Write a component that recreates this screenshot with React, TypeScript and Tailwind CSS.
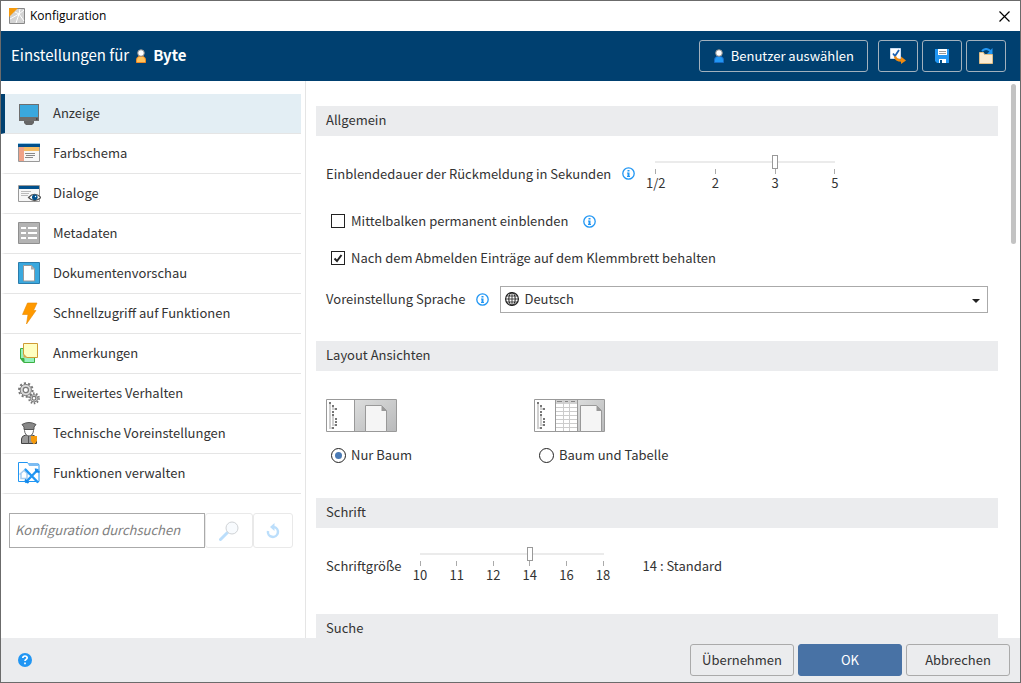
import { useState, type ReactNode } from "react"

function UserIcon({ color, outline }: { color: string; outline: string }) {
  return (
    <svg width="12" height="14" viewBox="0 0 12 14" className="shrink-0">
      <path d="M1.500 13.500V11q0-3 2.500-3.500h4q2.500.5 2.500 3.500v2.500z" fill={color} stroke={outline} />
      <circle cx="6" cy="4" r="3.300" fill="#fff" stroke="#8c8c8c" />
    </svg>
  )
}

function InfoIcon() {
  return (
    <svg width="13" height="13" viewBox="0 0 13 13" className="shrink-0">
      <circle cx="6.500" cy="6.500" r="5.700" fill="#fff" stroke="#2196f3" strokeWidth="1.300" />
      <path d="M5.500 3h2v1.500h-2zM5 5.500h2.500V9H8v1H5V9h.5V6.500H5z" fill="#2196f3" />
    </svg>
  )
}

function Gear({ x, y, r }: { x: number; y: number; r: number }) {
  const tooth = (2 * Math.PI * r) / 20
  return (
    <g fill="none">
      <circle cx={x} cy={y} r={r} stroke="#777" strokeWidth="2" strokeDasharray={`${tooth} ${tooth}`} />
      <circle cx={x} cy={y} r={r - 1.2} fill="#d9d9d9" stroke="#808080" strokeWidth="1" />
      <circle cx={x} cy={y} r={r / 2.6} fill="#fff" stroke="#777" strokeWidth="1.200" />
    </g>
  )
}

const navItems: { label: string; icon: ReactNode }[] = [
  {
    label: "Anzeige",
    icon: (
      <>
        <path d="M1 2h20v17H1z" fill="#6e6e6e" />
        <path d="M2 3h18v12H2z" fill="#3aa8de" />
        <path d="M18 16.500h1.500v1H18z" fill="#222" />
        <path d="M6 19h10v2l-2 2H8l-2-2z" fill="#666" />
      </>
    ),
  },
  {
    label: "Farbschema",
    icon: (
      <>
        <path d="M.5 1.500h21v18H.5z" fill="#f7f7f7" stroke="#999" />
        <path d="M0 1h22v1H0z" fill="#9ccbe8" />
        <path d="M0 2h22v3H0z" fill="#00508c" />
        <path d="M1 5h5v14H1z" fill="#f0a288" />
        <path d="M6 5h15v4H6z" fill="#f5bd66" />
        <path d="M7 11.500h10M8 13.500h9M7 15.500h8" stroke="#888" />
      </>
    ),
  },
  {
    label: "Dialoge",
    icon: (
      <>
        <path d="M.5 3.500h21v16H.5z" fill="#f7f7f7" stroke="#999" />
        <path d="M1 4h20v3H1z" fill="#00508c" />
        <path d="M3 9.500h10M3 11.500h8M3 13.500h7" stroke="#bbb" />
        <path d="M10.500 15.500q6-6.500 12.500 0q-6.500 6-12.500 0z" fill="#fff" stroke="#555" strokeWidth="1.200" />
        <circle cx="16.800" cy="15.300" r="2.800" fill="#00508c" />
        <circle cx="17.500" cy="14.500" r=".7" fill="#fff" />
      </>
    ),
  },
  {
    label: "Metadaten",
    icon: (
      <>
        <path d="M.5.5h21v21H.5z" fill="#b3b3b3" stroke="#8f8f8f" />
        <path d="M3 6h5M10 6h9M3 11h5M10 11h9M3 16h5M10 16h9" stroke="#fff" strokeWidth="2" />
      </>
    ),
  },
  {
    label: "Dokumentenvorschau",
    icon: (
      <>
        <path d="M.5.5h21v21H.5z" fill="#3aa8de" stroke="#2b7cab" />
        <path d="M5.500 3.500h8l3 3.500v12h-11z" fill="#fff" stroke="#999" />
        <path d="M13 3.500l4 4h-4z" fill="#aaa" />
      </>
    ),
  },
  {
    label: "Schnellzugriff auf Funktionen",
    icon: <path d="M9.500 1H19l-3.500 7.500H18L8.500 22l1.500-9.500H4.500z" fill="#f90" stroke="#e88a00" strokeWidth=".6" />,
  },
  {
    label: "Anmerkungen",
    icon: (
      <>
        <path d="M2.500 6.500h14v14H6l-3.500-4z" fill="#98f0be" stroke="#3cb043" />
        <path d="M2.500 16.500H6v4z" fill="#3cb043" stroke="#3cb043" />
        <path d="M5.500 1.500h14v14h-11l-3-3z" fill="#ffffc2" stroke="#cf9b35" />
        <path d="M5.500 11.500l4 4h-4z" fill="#d9a84b" />
      </>
    ),
  },
  {
    label: "Erweitertes Verhalten",
    icon: (
      <>
        <Gear x={7.8} y={8} r={6.8} />
        <Gear x={16} y={16.3} r={4.9} />
      </>
    ),
  },
  {
    label: "Technische Voreinstellungen",
    icon: (
      <>
        <path d="M3.500 21.500V17q0-3 4-4h7q4 1 4 4v4.500z" fill="#999" stroke="#444" />
        <path d="M6.500 6.500h9v2q-.5 5-4.500 5.500q-4-.5-4.500-5.500z" fill="#fff" stroke="#666" />
        <path d="M4 2.500Q11-1.500 18 2.500l-2 2.500v2.500H6V5z" fill="#888" stroke="#555" />
        <path d="M10.500 14v7.500" stroke="#555" />
        <path d="M13 14h6v5l-3 3.500-3-3.500z" fill="#f59a0c" />
      </>
    ),
  },
  {
    label: "Funktionen verwalten",
    icon: (
      <>
        <path d="M.5.5h9l1.500 2h10v17H.5z" fill="#fff" stroke="#2196f3" />
        <path d="M10 1h10.500v3H11z" fill="#7dbcf2" />
        <path d="M1.500 12.500l4.500-4 4.500 4M3 11.500v5h6v-5" fill="none" stroke="#a9cdf0" strokeWidth="1.500" />
        <path d="M7.500 7.500l12 12.500M19.500 8L8 20" stroke="#2196f3" strokeWidth="2.400" strokeLinecap="round" />
        <path d="M17.500 6.500l1 3 3 .5M7 17.500l3.500 3.500" fill="none" stroke="#1487e8" strokeWidth="1.800" />
      </>
    ),
  },
]

function TickSlider({ id, labels, value, onChange, className }: {
  id: string
  labels: string[]
  value: number
  onChange: (value: number) => void
  className: string
}) {
  return (
    <div className={className}>
      <input
        id={id}
        type="range"
        min={0}
        max={labels.length - 1}
        value={value}
        onChange={e => onChange(Number(e.target.value))}
        className="block h-3.5 w-full appearance-none bg-[linear-gradient(#ebebeb,#ebebeb)] bg-[length:calc(100%_-_6px)_2px] bg-center bg-no-repeat [&::-webkit-slider-thumb]:h-3.5 [&::-webkit-slider-thumb]:w-1.5 [&::-webkit-slider-thumb]:appearance-none [&::-webkit-slider-thumb]:border [&::-webkit-slider-thumb]:border-[#999] [&::-webkit-slider-thumb]:bg-white"
      />
      <div className="flex justify-between px-[3px]">
        {labels.map(label => (
          <div key={label} className="flex w-px flex-col items-center">
            <span className="h-[5px] w-px bg-[#aaa]" />
            <span className="leading-[18px] whitespace-nowrap">{label}</span>
          </div>
        ))}
      </div>
    </div>
  )
}

function CheckRow({ label, defaultChecked, children }: { label: string; defaultChecked?: boolean; children?: ReactNode }) {
  return (
    <div className="flex items-center gap-[15px] pl-[5px]">
      <label className="flex items-center gap-1.5 leading-5">
        <span className="relative size-3.5">
          <input type="checkbox" defaultChecked={defaultChecked} className="peer block size-3.5 appearance-none border border-[#222] bg-white" />
          <svg viewBox="0 0 14 14" className="pointer-events-none absolute inset-0 hidden size-3.5 peer-checked:block">
            <path d="M3.500 7.500l2.500 2.500 4.500-6" fill="none" stroke="#222" strokeWidth="2" />
          </svg>
        </span>
        {label}
      </label>
      {children}
    </div>
  )
}

function SectionTitle({ children }: { children: ReactNode }) {
  return <h2 className="h-[30px] bg-[#ebecee] px-2.5 leading-7">{children}</h2>
}

function TreePreview({ withTable }: { withTable?: boolean }) {
  const split = withTable ? 43.5 : 28.5
  const docX = withTable ? 46.5 : 39.5
  const gradient = withTable ? "preview-table" : "preview-tree"
  return (
    <svg width="71" height="33" viewBox="0 0 71 33">
      <defs>
        <linearGradient id={gradient} x1="0" y1="0" x2="1" y2="1">
          <stop offset="0" stopColor="#dcdddd" />
          <stop offset="1" stopColor="#b9babb" />
        </linearGradient>
      </defs>
      <path d="M.5.5h70v32H.5z" fill="#fff" stroke="#999" />
      <path d={`M${split} 1H70v31H${split}z`} fill={`url(#${gradient})`} />
      <path d={`M${split} 0v33`} stroke="#999" />
      <path d="M4 5v24h3M7 15v11h3M7 7v3h3" fill="none" stroke="#d0d0d0" strokeWidth="2" />
      <path d="M3 3h2v2H3zM6 6h2v2H6zM9 9h2v2H9zM6 12h2v2H6zM6 15h2v2H6zM9 19h2v2H9zM9 22h2v2H9zM9 25h2v2H9zM6 28h2v2H6z" fill="#777" />
      {withTable && (
        <>
          <path d="M21 1h22v4H21z" fill="#d2d2d2" />
          <path d="M21.500 0v33" stroke="#999" />
          <path d="M22 8.500h21M22 12.500h21M22 16.500h21M22 20.500h21M22 24.500h21M22 28.500h21M29.500 1v31M35.500 1v31" stroke="#ccc" />
          <path d="M23 2.500h5M31 2.500h3M37 2.500h4" stroke="#888" />
        </>
      )}
      <path d={`M${docX} 32.500v-26h16l5 5v21z`} fill="#f5f5f5" stroke="#999" />
      <path d={`M${docX + 16} 6.500l5.500 5.500h-5.500z`} fill="#999" />
    </svg>
  )
}

export default function App() {
  const [active, setActive] = useState("Anzeige")
  const [duration, setDuration] = useState(2)
  const [fontSize, setFontSize] = useState(3)
  const [layout, setLayout] = useState("tree")

  const layouts = [
    { id: "tree", label: "Nur Baum" },
    { id: "table", label: "Baum und Tabelle" },
  ]
  const toolButton = "flex h-8 w-10 items-center justify-center rounded-[3px] border border-[#a3b1bd]"
  const footerButton = "h-8 w-[104px] rounded-[3px] border leading-[30px]"

  return (
    <div className="flex h-screen flex-col border border-[#6b6b6b] bg-white font-['Noto_Sans_CJK_SC',sans-serif] text-[13px] text-[#333]">
      <div className="flex h-[30px] shrink-0 items-center gap-[5px] pr-2.5 pl-2 text-xs text-black">
        <svg width="16" height="16" viewBox="0 0 16 16">
          <path d="M.5.5h15v15H.5z" fill="#d3d3d3" stroke="#888" />
          <path d="M0 0h9L0 9z" fill="#f59a0c" />
          <path d="M1 11l9-5 5 7M15 2l-5 4-4-2M10 6l-3 9M10 6l1-5" fill="none" stroke="#fff" />
        </svg>
        <span className="flex-1 font-['Open_Sans',sans-serif]">Konfiguration</span>
        <button aria-label="Schließen">
          <svg width="11" height="11" viewBox="0 0 11 11">
            <path d="M.5.5l10 10M10.500.5l-10 10" stroke="#000" strokeWidth="1.200" />
          </svg>
        </button>
      </div>

      <header className="flex h-[50px] shrink-0 items-center bg-[#004070] pr-3.5 pl-2.5 text-white">
        <h1 className="flex flex-1 items-center gap-1.5 text-[15px] leading-5">
          <span className="pb-0.5">Einstellungen für</span>
          <UserIcon color="#ffc35c" outline="#f08a24" />
          <b className="pb-0.5">Byte</b>
        </h1>
        <button className="mr-2.5 flex h-8 items-center gap-1.5 rounded-[3px] border border-[#a3b1bd] px-[13px] text-[13px]">
          <UserIcon color="#2196f3" outline="#1769c0" />
          Benutzer auswählen
        </button>
        <div className="flex gap-1">
          <button className={toolButton} aria-label="Einstellungen übertragen">
            <svg width="16" height="16" viewBox="0 0 16 16">
              <path d="M.5.5h10v10H.5z" fill="#fff" stroke="#c9dcf2" />
              <path d="M3 5.500l2 2.500 4-6" fill="none" stroke="#1c62b4" strokeWidth="1.800" />
              <path d="M5 8.500q1 4 6.500 4" fill="none" stroke="#f08a10" strokeWidth="2.500" />
              <path d="M11 8.500l5 4-5 3.500z" fill="#f08a10" />
            </svg>
          </button>
          <button className={toolButton} aria-label="Speichern">
            <svg width="14" height="14" viewBox="0 0 14 14">
              <path d="M0 0h14v14H2l-2-2z" fill="#2196f3" />
              <path d="M3 0h9v6H3zM4 10h7v4H4z" fill="#fff" />
              <path d="M4 2.500h7M4 4.500h7" stroke="#999" />
              <path d="M5 11h2v3H5z" fill="#00508c" />
            </svg>
          </button>
          <button className={toolButton} aria-label="Öffnen">
            <svg width="16" height="16" viewBox="0 0 16 16">
              <path d="M1.500 4.500h4l1 2h8v9h-13z" fill="#faebd2" stroke="#e0bd85" />
              <path d="M4 3q4-4 8.500 0" fill="none" stroke="#2196f3" strokeWidth="2" />
              <path d="M14.500 0v6H9z" fill="#2196f3" />
            </svg>
          </button>
        </div>
      </header>

      <div className="flex min-h-0 flex-1">
        <aside className="w-[305px] shrink-0 border-r border-[#e5e5e5] pt-[13px]">
          <nav className="mr-1">
            {navItems.map(item => (
              <button
                key={item.label}
                onClick={() => setActive(item.label)}
                className={`flex h-10 w-full items-center gap-3 border-b border-b-[#e5e5e5] border-l-4 pl-[13px] text-left ${
                  active === item.label ? "border-l-[#004070] bg-[#e3eef4]" : "border-l-transparent"
                }`}
              >
                <svg width="23" height="23" viewBox="0 0 23 23">{item.icon}</svg>
                <span className="pb-0.5 leading-[19px]">{item.label}</span>
              </button>
            ))}
          </nav>
          <div className="mt-[19px] mr-3 ml-2 flex h-[35px]">
            <input
              aria-label="Konfiguration durchsuchen"
              placeholder="Konfiguration durchsuchen"
              className="min-w-0 flex-1 border border-[#aaa] px-[5px] pb-0.5 italic placeholder:text-[#808080]"
            />
            <button className="flex w-12 items-center justify-center rounded-[3px] border border-[#e9e9e9]" aria-label="Suchen">
              <svg width="20" height="20" viewBox="0 0 20 20">
                <path d="M1.500 18.500l7-7" stroke="#bbdefb" strokeWidth="3" strokeLinecap="round" />
                <circle cx="13" cy="7" r="6" fill="#f8fbfe" stroke="#d0d3d6" />
              </svg>
            </button>
            <button className="flex w-10 items-center justify-center rounded-[3px] border border-[#e9e9e9]" aria-label="Zurücksetzen">
              <svg width="14" height="16" viewBox="0 0 14 16">
                <path d="M2 8a5 5 0 1 0 6-4" fill="none" stroke="#bbdefb" strokeWidth="2.500" />
                <path d="M8.500 0v8L4 4z" fill="#bbdefb" />
              </svg>
            </button>
          </div>
        </aside>

        <main className="min-w-0 flex-1 overflow-hidden pt-[25px] pl-2.5">
          <section>
            <SectionTitle>Allgemein</SectionTitle>
            <div className="px-2.5 pt-[19px] pb-7">
              <div className="flex items-center">
                <label htmlFor="duration">Einblendedauer der Rückmeldung in Sekunden</label>
                <span className="mr-[17px] ml-[11px]"><InfoIcon /></span>
                <TickSlider id="duration" labels={["1/2", "2", "3", "5"]} value={duration} onChange={setDuration} className="w-[186px]" />
              </div>
              <div className="mt-[19px]">
                <CheckRow label="Mittelbalken permanent einblenden">
                  <InfoIcon />
                </CheckRow>
              </div>
              <div className="mt-[17px]">
                <CheckRow label="Nach dem Abmelden Einträge auf dem Klemmbrett behalten" defaultChecked />
              </div>
              <div className="mt-[18px] flex items-center gap-[11px]">
                <label htmlFor="language" className="pb-0.5">Voreinstellung Sprache</label>
                <InfoIcon />
                <div className="relative flex-1">
                  <select id="language" className="block h-[27px] w-full appearance-none border border-[#aaa] bg-white pb-0.5 pl-[23px]">
                    <option>Deutsch</option>
                  </select>
                  <svg width="14" height="14" viewBox="0 0 14 14" className="pointer-events-none absolute top-1.5 left-[5px]" fill="none" stroke="#222">
                    <circle cx="7" cy="7" r="6.400" strokeWidth="1.200" />
                    <ellipse cx="7" cy="7" rx="3.200" ry="6.300" />
                    <path d="M7 .5v13M.5 7h13M1.500 4h11M1.500 10h11" strokeWidth=".8" />
                  </svg>
                  <svg width="8" height="4" viewBox="0 0 8 4" className="pointer-events-none absolute top-[13px] right-2">
                    <path d="M0 0h8L4 4z" fill="#222" />
                  </svg>
                </div>
              </div>
            </div>
          </section>

          <section>
            <SectionTitle>Layout Ansichten</SectionTitle>
            <div className="flex px-2.5 pt-7 pb-[33px]">
              {layouts.map(l => (
                <div key={l.id} className="w-52">
                  <label htmlFor={l.id} className="block h-[33px]"><TreePreview withTable={l.id === "table"} /></label>
                  <label className="mt-[13px] flex items-center gap-[5px] pl-[5px] leading-5">
                    <input
                      id={l.id}
                      type="radio"
                      name="layout"
                      checked={layout === l.id}
                      onChange={() => setLayout(l.id)}
                      className="grid size-[15px] appearance-none place-items-center rounded-full border border-[#222] before:size-[7px] before:rounded-full checked:before:bg-[#4a7ab5]"
                    />
                    {l.label}
                  </label>
                </div>
              ))}
            </div>
          </section>

          <section>
            <SectionTitle>Schrift</SectionTitle>
            <div className="flex items-center px-2.5 pt-[19px] pb-[30px]">
              <label htmlFor="font-size" className="mr-[15px]">Schriftgröße</label>
              <TickSlider id="font-size" labels={["10", "11", "12", "14", "16", "18"]} value={fontSize} onChange={setFontSize} className="w-[190px]" />
              <output htmlFor="font-size" className="ml-9">14 : Standard</output>
            </div>
          </section>

          <section>
            <SectionTitle>Suche</SectionTitle>
          </section>
        </main>

        {/* scroll bar */}
        <div className="w-[22px] shrink-0 pt-[3px] pr-1 pl-[13px]">
          <div className="h-40 rounded-full bg-[#c3c3c3]" />
        </div>
      </div>

      <footer className="flex h-11 shrink-0 items-center gap-1 bg-[#ebecee] pr-2.5 pl-[17px]">
        <button className="mr-auto" aria-label="Hilfe">
          <svg width="14" height="14" viewBox="0 0 14 14">
            <circle cx="7" cy="7" r="7" fill="#2196f3" />
            <path d="M4.800 5q.2-2 2.200-2t2.200 1.800q0 1-1.200 1.700-1 .6-1 1.500M7 9.500v1.800" fill="none" stroke="#fff" strokeWidth="1.700" />
          </svg>
        </button>
        <button className={`${footerButton} border-[#aaa]`}>Übernehmen</button>
        <button className={`${footerButton} border-[#4872a5] bg-[#4872a5] text-white`}>OK</button>
        <button className={`${footerButton} border-[#aaa]`}>Abbrechen</button>
      </footer>
    </div>
  )
}
